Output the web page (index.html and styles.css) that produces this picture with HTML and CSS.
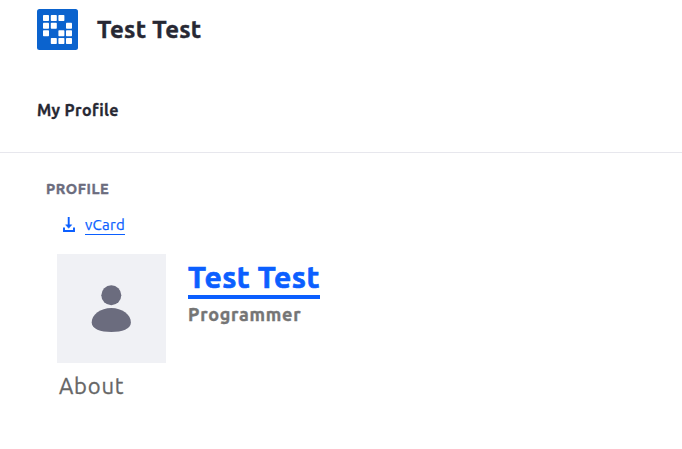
FILE: index.html
```html
<!DOCTYPE html>
<html lang="en">
<head>
<meta charset="utf-8">
<title>Test Test</title>
<link rel="stylesheet" href="styles.css">
</head>
<body>
<header class="banner">
  <svg class="logo" viewBox="0 0 41 41" aria-hidden="true">
    <rect width="41" height="41" rx="2.5" fill="#0b63ce"/>
    <g fill="#fff">
      <rect x="6" y="6" width="6" height="6" rx=".7"/><rect x="13.8" y="6" width="6" height="6" rx=".7"/><rect x="21.4" y="6" width="6" height="6" rx=".7"/>
      <rect x="6" y="13.7" width="6" height="6" rx=".7"/><rect x="13.8" y="13.7" width="6" height="6" rx=".7"/><rect x="29" y="13.7" width="6" height="6" rx=".7"/>
      <rect x="6" y="21.3" width="6" height="6" rx=".7"/><rect x="21.4" y="21.3" width="6" height="6" rx=".7"/><rect x="29" y="21.3" width="6" height="6" rx=".7"/>
      <rect x="13.8" y="29" width="6" height="6" rx=".7"/><rect x="21.4" y="29" width="6" height="6" rx=".7"/><rect x="29" y="29" width="6" height="6" rx=".7"/>
    </g>
  </svg>
  <h1 class="site-name">Test Test</h1>
</header>
<nav class="nav"><span class="nav-item">My Profile</span></nav>
<main class="portlet">
  <h2 class="portlet-title">PROFILE</h2>
  <div class="actions">
    <svg class="download" viewBox="0 0 12 15" aria-hidden="true">
      <path d="M5.700 0v9M1 10.500V14h10v-3.500" fill="none" stroke="#0b5fff" stroke-width="1.900"/>
      <path d="M2.600 7.800h6.200L5.700 11.300Z" fill="#0b5fff" stroke="#0b5fff" stroke-width=".5" stroke-linejoin="round"/>
    </svg>
    <a class="vcard">vCard</a>
  </div>
  <section class="profile">
    <div class="avatar">
      <svg class="person" viewBox="0 0 40 48" aria-hidden="true">
        <circle cx="20.300" cy="10.300" r="10" fill="#6b6c7e"/>
        <path d="M20.300 23C9.500 23 .7 29.500 .7 37.500C.7 44 9.500 47 20.300 47S39.900 44 39.900 37.500C39.900 29.500 31 23 20.300 23Z" fill="#6b6c7e"/>
      </svg>
    </div>
    <div class="details">
      <a class="name">Test Test</a>
      <p class="job">Programmer</p>
    </div>
  </section>
  <h3 class="about">About</h3>
</main>
</body>
</html>
```
FILE: styles.css
```css
* { box-sizing: border-box; }
body {
  margin: 0;
  background: #fff;
  color: #272833;
  font-family: "Ubuntu", "Noto Sans", sans-serif;
}
h1, h2, h3, p { margin: 0; white-space: nowrap; }
.banner {
  display: flex;
  align-items: center;
  gap: 19px;
  height: 59px;
  padding-left: 37px;
}
.logo { width: 41px; height: 41px; }
.site-name { font-size: 24px; line-height: 30px; font-weight: 700; letter-spacing: .25px; -webkit-text-stroke: .4px; }
.nav {
  height: 94px;
  padding: 39px 0 0 37px;
  border-bottom: 1px solid #e7e7ed;
}
.nav-item { display: block; font-size: 16px; line-height: 24px; font-weight: 700; letter-spacing: .36px; -webkit-text-stroke: .3px; }
.portlet { padding: 26px 0 0 46px; }
.portlet-title { font-size: 14.5px; line-height: 20px; font-weight: 700; color: #6b6c7e; letter-spacing: .6px; -webkit-text-stroke: .4px; }
.actions {
  display: flex;
  align-items: flex-start;
  gap: 10px;
  height: 37px;
  margin-top: 18px;
  padding-left: 17px;
}
.download { width: 12px; height: 15px; }
.vcard {
  height: 18px;
  border-bottom: 1px solid #0b5fff;
  color: #0b5fff;
  font-size: 15px;
  line-height: 15px;
  letter-spacing: .25px;
  -webkit-text-stroke: .25px;
}
.profile { display: flex; gap: 22px; padding-left: 11px; }
.avatar {
  display: flex;
  align-items: center;
  justify-content: center;
  width: 109px;
  height: 109px;
  padding-right: 1px;
  background: #f0f1f5;
}
.person { width: 40px; height: 48px; }
.details { display: flex; flex-direction: column; align-items: flex-start; padding-top: 5px; }
.name {
  height: 40px;
  border-bottom: 4px solid #0b5fff;
  color: #0b5fff;
  font-size: 30px;
  line-height: 36px;
  font-weight: 700;
  letter-spacing: .45px;
  -webkit-text-stroke: .7px;
}
.job { margin-top: 3px; color: #757575; font-size: 18px; line-height: 24px; font-weight: 700; letter-spacing: .74px; -webkit-text-stroke: .4px; }
.about { margin-top: 8px; padding-left: 13px; color: #666; font-size: 22px; line-height: 30px; font-weight: 400; letter-spacing: .8px; -webkit-text-stroke: .3px; }
```
